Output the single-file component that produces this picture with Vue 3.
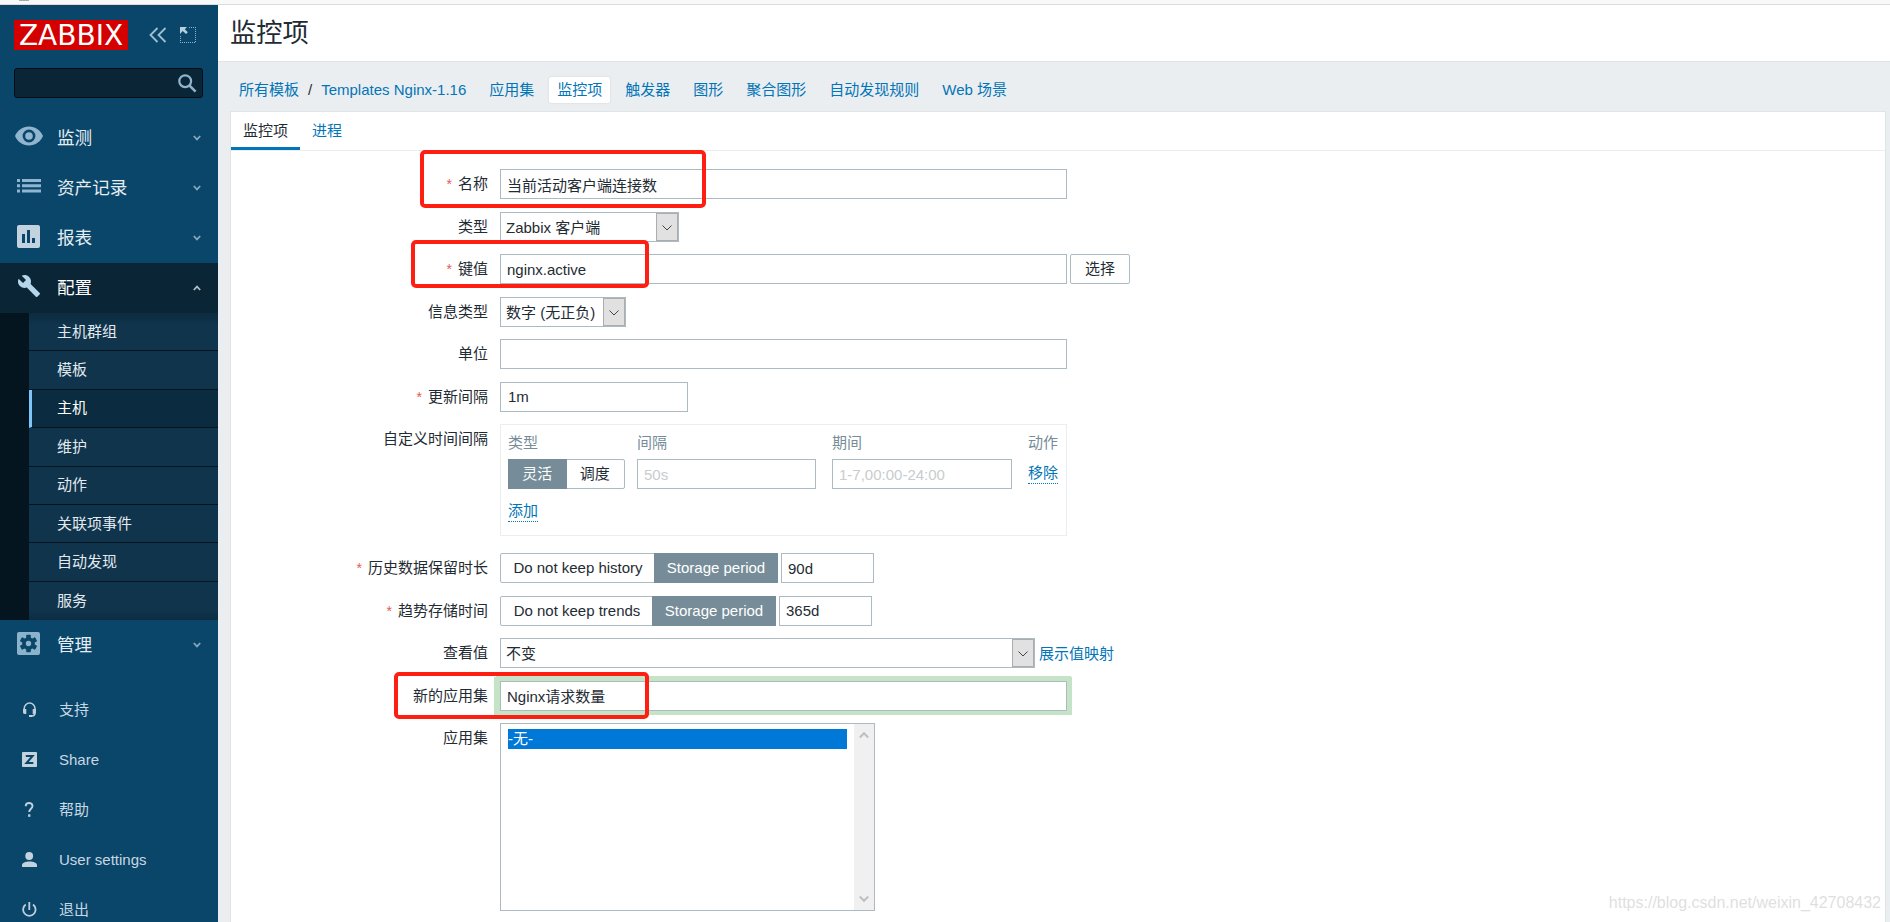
<template>
  <div class="screen">
    <div class="browser-edge"><span class="edge-mark"></span></div>
    <div class="layout">
      <aside class="sidebar">
        <div class="brand">
          <div class="logo">ZABBIX</div>
          <svg class="collapse" width="18" height="16" viewBox="0 0 18 16">
            <path d="M8.5 1 1.5 8l7 7M16.5 1l-7 7 7 7" fill="none" stroke="#9fbfd3" stroke-width="1.8" />
          </svg>
          <svg class="kiosk" width="16" height="16" viewBox="0 0 16 16">
            <path d="M9 .5h7M15.5 2v14M0 15.5h15M.5 9v6" fill="none" stroke="#8fb4cb" stroke-dasharray="1 1" />
            <path d="M0 0h7L4.8 2.2l3 3-1.7 1.7-3.4-3L0 7z" fill="#b5cfdf" />
          </svg>
        </div>

        <div class="search">
          <svg width="19" height="19" viewBox="0 0 19 19">
            <circle cx="7.2" cy="7.2" r="5.9" fill="none" stroke="#8fb4cb" stroke-width="2.2" />
            <path d="m11.3 11.3 6.3 6.3" stroke="#8fb4cb" stroke-width="2.6" />
          </svg>
        </div>

        <nav class="menu">
          <template v-for="item in menu" :key="item.label">
            <div class="menu-item" :class="{ open: item.children }">
              <span class="menu-icon">
                <svg v-if="item.icon === 'eye'" width="28" height="20" viewBox="0 0 28 20">
                  <path fill="#8fb5cf" fill-rule="evenodd" d="M14 .5C7.6.5 2.3 4.4 0 10c2.3 5.600 7.600 9.500 14 9.500S25.700 15.600 28 10C25.700 4.400 20.400.5 14 .5zm0 15.900a6.400 6.400 0 1 1 0-12.800 6.400 6.400 0 0 1 0 12.800zm0-2.600a3.800 3.800 0 1 0 0-7.600 3.800 3.800 0 0 0 0 7.600z" />
                </svg>
                <svg v-else-if="item.icon === 'list'" width="24" height="14" viewBox="0 0 24 14">
                  <path fill="#8fb5cf" d="M0 0h3v3H0zM5 0h19v3H5zM0 5.300h3v3H0zM5 5.300h19v3H5zM0 10.600h3v3H0zM5 10.600h19v3H5z" />
                </svg>
                <svg v-else-if="item.icon === 'report'" width="23" height="23" viewBox="0 0 23 23">
                  <rect width="23" height="23" rx="2" fill="#c2d2de" />
                  <path fill="#0a466a" d="M5 9h3v9H5zM10 5h3v13h-3zM15 13h3v5h-3z" />
                </svg>
                <svg v-else-if="item.icon === 'wrench'" width="24" height="24" viewBox="0 0 24 24">
                  <path fill="#b5d5eb" d="M22.700 19l-9.100-9.100c.9-2.300.4-5-1.500-6.900-2-2-5-2.400-7.400-1.300L9 6 6 9 1.600 4.700C.4 7.100.9 10.100 2.900 12.100c1.900 1.900 4.600 2.400 6.900 1.500l9.100 9.100c.4.4 1 .4 1.400 0l2.300-2.300c.5-.4.5-1.100.1-1.400z" />
                </svg>
                <svg v-else width="23" height="23" viewBox="0 0 23 23">
                  <rect width="23" height="23" rx="2" fill="#8db3cc" />
                  <g fill="#0a466a">
                    <circle cx="11.500" cy="11.500" r="6.300" />
                    <rect v-for="a in [0, 60, 120]" :key="a" x="9.200" y="2.700" width="4.600" height="17.600" rx=".8" :transform="`rotate(${a} 11.5 11.5)`" />
                  </g>
                  <circle cx="11.500" cy="11.500" r="2.700" fill="#8db3cc" />
                </svg>
              </span>
              <span class="menu-label">{{ item.label }}</span>
              <svg class="chevron" width="8" height="6" viewBox="0 0 8 6">
                <path :d="item.children ? 'M.8 5 4 1.600 7.200 5' : 'M.8 1 4 4.400 7.200 1'" fill="none" stroke="currentColor" stroke-width="1.700" />
              </svg>
            </div>
            <ul v-if="item.children" class="submenu">
              <li v-for="child in item.children" :key="child" :class="{ selected: child === '主机' }">{{ child }}</li>
            </ul>
          </template>
        </nav>

        <nav class="user-menu">
          <div v-for="item in userMenu" :key="item.label" class="user-item">
            <svg width="15" height="15" viewBox="0 0 15 15">
              <g v-if="item.icon === 'support'">
                <path d="M2.200 8V6.500a5.400 5.400 0 0 1 10.800 0V11c0 2-1.200 2.900-3 2.900" fill="none" stroke="#bfd0dc" stroke-width="1.500" />
                <path d="M1 7h3.300v5H2.800C1.600 12 1 11.300 1 10.300zM10.700 7H14v3.300c0 1-.6 1.700-1.800 1.700h-1.500zM7 13h3v2H7z" fill="#bfd0dc" />
              </g>
              <g v-else-if="item.icon === 'share'">
                <rect width="15" height="15" rx=".8" fill="#c3d3de" />
                <path d="M3.800 4h6.800L4.500 11h6.800" fill="none" stroke="#0a466a" stroke-width="2" />
              </g>
              <g v-else-if="item.icon === 'help'">
                <path d="M3.700 4.300C3.800 2 5.200 1 7 1c2.100 0 3.500 1.200 3.500 3 0 2.500-3.300 3-3.300 6" fill="none" stroke="#bfd0dc" stroke-width="1.900" />
                <rect x="6.100" y="12.300" width="2.300" height="2.500" fill="#bfd0dc" />
              </g>
              <g v-else-if="item.icon === 'user'" fill="#c3d3de">
                <circle cx="7.200" cy="4" r="3.900" />
                <path d="M0 15v-1.800C0 10.900 3.600 9.600 7.500 9.600s7.500 1.300 7.500 3.600V15z" />
              </g>
              <g v-else fill="none" stroke="#bfd0dc" stroke-width="1.800">
                <path d="M7.300 0v8M3.700 2.600a6.200 6.200 0 1 0 7.300 0" />
              </g>
            </svg>
            <span>{{ item.label }}</span>
          </div>
        </nav>
      </aside>

      <main class="main">
        <header class="page-title"><h1>监控项</h1></header>

        <div class="crumbs">
          <a>所有模板</a>
          <span class="slash">/</span>
          <a class="template-name">Templates Nginx-1.16</a>
          <a v-for="link in links" :key="link" class="crumb" :class="{ selected: link === '监控项' }">{{ link }}</a>
        </div>

        <section class="panel">
          <div class="tabs">
            <a class="tab active">监控项</a>
            <a class="tab">进程</a>
          </div>

          <form class="form" @submit.prevent>
            <div class="row">
              <label class="required">名称</label>
              <input v-model="form.name" class="wide" />
            </div>
            <div class="row">
              <label>类型</label>
              <div class="select type-select">
                <span>Zabbix 客户端</span>
                <i><svg width="10" height="6" viewBox="0 0 10 6"><path d="M.5.500 5 5 9.500.5" /></svg></i>
              </div>
            </div>
            <div class="row">
              <label class="required">键值</label>
              <input v-model="form.key" class="wide" />
              <button type="button" class="pick">选择</button>
            </div>
            <div class="row">
              <label>信息类型</label>
              <div class="select value-select">
                <span>数字 (无正负)</span>
                <i><svg width="10" height="6" viewBox="0 0 10 6"><path d="M.5.500 5 5 9.500.5" /></svg></i>
              </div>
            </div>
            <div class="row">
              <label>单位</label>
              <input v-model="form.units" class="wide" />
            </div>
            <div class="row">
              <label class="required">更新间隔</label>
              <input v-model="form.delay" class="delay" />
            </div>
            <div class="row intervals-row">
              <label>自定义时间间隔</label>
              <div class="intervals">
                <span class="th">类型</span>
                <span class="th">间隔</span>
                <span class="th">期间</span>
                <span class="th">动作</span>
                <div class="segmented even">
                  <span class="on">灵活</span>
                  <span>调度</span>
                </div>
                <input placeholder="50s" />
                <input placeholder="1-7,00:00-24:00" />
                <div class="cell"><a class="dotted">移除</a></div>
                <div class="cell add"><a class="dotted">添加</a></div>
              </div>
            </div>
            <div class="row">
              <label class="required">历史数据保留时长</label>
              <div class="segmented history">
                <span>Do not keep history</span>
                <span class="on">Storage period</span>
              </div>
              <input v-model="form.history" class="period" />
            </div>
            <div class="row">
              <label class="required">趋势存储时间</label>
              <div class="segmented trends">
                <span>Do not keep trends</span>
                <span class="on">Storage period</span>
              </div>
              <input v-model="form.trends" class="period" />
            </div>
            <div class="row">
              <label>查看值</label>
              <div class="select map-select">
                <span>不变</span>
                <i><svg width="10" height="6" viewBox="0 0 10 6"><path d="M.5.500 5 5 9.500.5" /></svg></i>
              </div>
              <a class="map-link">展示值映射</a>
            </div>
            <div class="row">
              <label>新的应用集</label>
              <input v-model="form.application" class="wide focused" />
            </div>
            <div class="row">
              <label>应用集</label>
              <div class="listbox">
                <div class="options"><div class="option">-无-</div></div>
                <div class="scrollbar">
                  <svg width="10" height="8" viewBox="0 0 10 8"><path d="M.8 6.500 5 2.200l4.200 4.300" /></svg>
                  <svg width="10" height="8" viewBox="0 0 10 8"><path d="M.8 1.500 5 5.800l4.200-4.300" /></svg>
                </div>
              </div>
            </div>
          </form>
        </section>
      </main>
    </div>

    <div class="mark mark-name"></div>
    <div class="mark mark-key"></div>
    <div class="mark mark-app"></div>
    <div class="watermark">https://blog.csdn.net/weixin_42708432</div>
  </div>
</template>

<script setup>
import { ref } from 'vue'

const menu = [
  { label: '监测', icon: 'eye' },
  { label: '资产记录', icon: 'list' },
  { label: '报表', icon: 'report' },
  {
    label: '配置',
    icon: 'wrench',
    children: ['主机群组', '模板', '主机', '维护', '动作', '关联项事件', '自动发现', '服务']
  },
  { label: '管理', icon: 'gear' }
]

const userMenu = [
  { label: '支持', icon: 'support' },
  { label: 'Share', icon: 'share' },
  { label: '帮助', icon: 'help' },
  { label: 'User settings', icon: 'user' },
  { label: '退出', icon: 'power' }
]

const links = ['应用集', '监控项', '触发器', '图形', '聚合图形', '自动发现规则', 'Web 场景']

const form = ref({
  name: '当前活动客户端连接数',
  key: 'nginx.active',
  units: '',
  delay: '1m',
  history: '90d',
  trends: '365d',
  application: 'Nginx请求数量'
})
</script>

<style>
html,
body {
  overflow: hidden;
}
</style>

<style scoped>
* {
  box-sizing: border-box;
}

.screen {
  position: relative;
  display: flex;
  flex-direction: column;
  width: 1890px;
  height: 922px;
  overflow: hidden;
  background: #ebeef0;
  color: #1f2c33;
  font-family: "Liberation Sans", "Noto Sans CJK SC", sans-serif;
  font-size: 15px;
  line-height: 20px;
}

.browser-edge {
  height: 5px;
  flex: none;
  background: #f9f9f9;
  border-bottom: 1px solid #dcdcdc;
}

.edge-mark {
  display: block;
  width: 10px;
  height: 1px;
  margin-left: 19px;
  background: #aaa;
}

.layout {
  display: flex;
  flex: 1;
  min-height: 0;
}

a {
  color: #0275b8;
}

svg {
  display: block;
}

/* sidebar */
.sidebar {
  width: 218px;
  flex: none;
  overflow: hidden;
  background: #0a466a;
}

.brand {
  display: flex;
  align-items: center;
  height: 30px;
  margin: 15px 0 0 14px;
}

.logo {
  width: 114px;
  height: 30px;
  background: #d40000;
  color: #fff;
  font: 28px/31px "DejaVu Sans", sans-serif;
  text-align: center;
}

.collapse {
  margin-left: 21px;
}

.kiosk {
  margin-left: 13px;
}

.search {
  display: flex;
  align-items: center;
  justify-content: flex-end;
  width: 189px;
  height: 30px;
  margin: 18px 0 15px 14px;
  padding-right: 5px;
  background: #0a2536;
  border: 1px solid #020e16;
  border-radius: 3px;
}

.menu-item {
  display: flex;
  align-items: center;
  height: 50px;
  padding-right: 17px;
  color: #e6edf2;
  font-size: 17.6px;
}

.menu-item.open {
  background: #0a2536;
  color: #fff;
}

.menu-icon {
  display: flex;
  justify-content: center;
  width: 57px;
}

.menu-icon svg {
  position: relative;
  top: -2px;
}

.menu-label {
  flex: 1;
}

.chevron {
  color: #8aa9bd;
}

.open .chevron {
  color: #b3bdc4;
}

.submenu {
  margin: 0;
  padding: 0 0 0 29px;
  list-style: none;
  background: #04151f;
}

.submenu li {
  display: flex;
  align-items: center;
  height: 38.4px;
  padding-left: 28px;
  background: #0f344c;
  border-bottom: 1px solid #04151f;
  color: #e3eaef;
}

.submenu li:first-child {
  background: linear-gradient(#0c2b3f, #0f344c 12px);
}

.submenu li:last-child {
  border-bottom: 0;
  background: linear-gradient(#0f344c 28px, #0d2d42);
}

.submenu li.selected {
  padding-left: 25px;
  background: #0b2c40;
  border-left: 3px solid #7dc6fb;
  color: #fff;
}

.user-menu {
  margin-top: 15px;
}

.user-item {
  display: flex;
  align-items: center;
  gap: 22px;
  height: 50px;
  padding-left: 22px;
  color: #c8d7e1;
}

.user-item svg {
  position: relative;
  top: -1px;
}

/* page head */
.main {
  display: flex;
  flex-direction: column;
  flex: 1;
  min-width: 0;
}

.page-title {
  display: flex;
  align-items: center;
  height: 57px;
  flex: none;
  padding-left: 12px;
  background: #fff;
  border-bottom: 1px solid #dfe4e7;
}

.page-title h1 {
  margin: 0;
  font-size: 26.3px;
  font-weight: normal;
  line-height: 36px;
}

.crumbs {
  display: flex;
  align-items: center;
  height: 49px;
  flex: none;
  padding: 7px 0 0 21px;
}

.slash {
  margin: 0 9px;
}

.template-name {
  margin-right: 15px;
}

.crumb {
  height: 26px;
  margin-right: 7px;
  padding: 2px 8px;
  border-radius: 2px;
  line-height: 21px;
}

.crumb.selected {
  background: #fff;
  box-shadow: 0 0 1px 1px #e0e5e8;
}

.panel {
  flex: 1;
  min-height: 0;
  margin: 0 4px 0 12px;
  background: #fff;
  border: 1px solid #dfe4e7;
  border-bottom: 0;
}

.tabs {
  display: flex;
  height: 39px;
  border-bottom: 1px solid #ebeef0;
}

.tab {
  height: 38px;
  padding: 8px 12px 0;
  line-height: 21px;
}

.tab.active {
  border-bottom: 3px solid #0275b8;
  color: #1f2c33;
}

/* form */
.form {
  display: flex;
  flex-direction: column;
  gap: 12.5px;
  padding-top: 18px;
}

.row {
  display: flex;
  align-items: flex-start;
}

.row > label {
  width: 257px;
  margin-right: 12px;
  line-height: 30px;
  height: 30px;
  text-align: right;
}

.required::before {
  content: "*";
  margin-right: 6px;
  color: #e45959;
  font-size: 14px;
}

input {
  height: 30px;
  padding: 0 6px;
  border: 1px solid #acbbc2;
  border-radius: 0;
  outline: none;
  background: #fff;
  color: #1f2c33;
  font: inherit;
}

input::placeholder {
  color: #c8ccce;
}

.wide {
  width: 567px;
}

.delay {
  width: 188px;
  padding-left: 7px;
}

.period {
  width: 93px;
  margin-left: 3px;
}

.focused {
  box-shadow: 0 -1px 0 4px #c5e3c6, -2px 0 0 4px #c5e3c6, 1px 0 0 4px #c5e3c6;
}

.select {
  display: flex;
  justify-content: space-between;
  height: 30px;
  border: 1px solid #acbbc2;
  background: #fff;
}

.select span {
  padding: 5px 0 0 5px;
}

.select i {
  display: flex;
  justify-content: center;
  width: 22px;
  padding-top: 11px;
  border: 1px solid #adadad;
  background: #e1e1e1;
}

.select path {
  fill: none;
  stroke: #444;
}

.type-select {
  width: 179px;
}

.value-select {
  width: 126px;
}

.map-select {
  width: 535px;
}

.map-link {
  margin: 6px 0 0 4px;
}

.pick {
  width: 60px;
  height: 30px;
  margin-left: 3px;
  padding: 0;
  background: #fff;
  border: 1px solid #acbbc2;
  border-radius: 2px;
  color: #1f2c33;
  font: inherit;
}

.intervals-row {
  margin-bottom: 4.5px;
}

.intervals {
  display: grid;
  grid-template-columns: 117px 179px 180px 31px;
  grid-template-rows: 20px 30px 20px;
  column-gap: 16px;
  row-gap: 6px;
  width: 567px;
  height: 112px;
  padding: 8px 7px;
  border: 1px solid #ebeef0;
}

.intervals > :nth-child(4n + 1) {
  margin-right: -4px;
}

.intervals {
  grid-template-columns: 113px 179px 180px 31px;
}

.th {
  color: #768d99;
}

.intervals .segmented {
  width: 117px;
}

.cell {
  padding-top: 4px;
}

.add {
  padding-top: 6px;
}

.dotted {
  display: inline-block;
  border-bottom: 1px dotted #0275b8;
  line-height: 20px;
}

.segmented {
  display: flex;
  height: 30px;
  border: 1px solid #acbbc2;
  border-radius: 2px;
}

.segmented span {
  flex: 1;
  line-height: 28px;
  text-align: center;
}

.segmented .on {
  margin: -1px;
  background: #768d99;
  color: #fff;
  line-height: 30px;
}

.history {
  width: 278px;
}

.trends {
  width: 276px;
}

.history .on,
.trends .on {
  flex: none;
  width: 124px;
}

.listbox {
  display: flex;
  width: 375px;
  height: 188px;
  border: 1px solid #acbbc2;
}

.options {
  flex: 1;
  padding: 5px 7px;
}

.option {
  height: 20px;
  background: #0078d7;
  color: #fff;
}

.scrollbar {
  display: flex;
  flex-direction: column;
  align-items: center;
  justify-content: space-between;
  width: 20px;
  padding: 7px 0;
  background: #f0f0f0;
}

.scrollbar path {
  fill: none;
  stroke: #bfbfbf;
  stroke-width: 2;
}

/* red highlight frames over the form */
.mark {
  position: absolute;
  border: 4px solid #ff1f12;
  border-radius: 5px;
}

.mark-name {
  left: 420px;
  top: 150px;
  width: 286px;
  height: 58px;
}

.mark-key {
  left: 411px;
  top: 240px;
  width: 238px;
  height: 48px;
}

.mark-app {
  left: 394px;
  top: 672px;
  width: 255px;
  height: 47px;
}

.watermark {
  position: absolute;
  right: 9px;
  bottom: 9px;
  color: #dfdfdf;
  font-size: 16px;
}
</style>
